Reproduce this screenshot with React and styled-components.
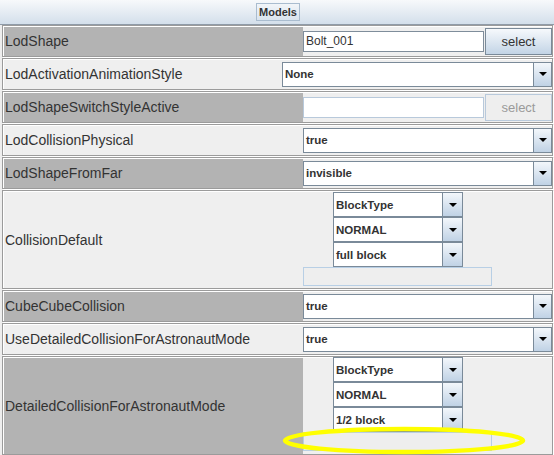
import React from 'react';
import styled, { createGlobalStyle } from 'styled-components';

const Global = createGlobalStyle`
  html, body { margin: 0; padding: 0; background: #eeeeee; overflow: hidden; }
  * { box-sizing: border-box; }
`;

const Page = styled.div`
  position: relative;
  width: 554px;
  height: 455px;
  overflow: hidden;
  background: #eeeeee;
  font-family: "Liberation Sans", Arial, sans-serif;
`;

const Header = styled.div`
  height: 25px;
  border-bottom: 1px solid #8f9ba8;
  background: linear-gradient(#f7f9fb, #d3dfeb);
  display: flex;
  align-items: center;
  justify-content: center;
  padding-left: 2px;
`;

const Title = styled.div`
  height: 18px;
  padding: 0 2px;
  border: 1px solid #a9bccf;
  font-weight: bold;
  font-size: 11px;
  color: #333;
  display: flex;
  align-items: center;
`;

const List = styled.div`
  display: flex;
  flex-direction: column;
  padding-left: 2px;
`;

const Row = styled.div`
  display: flex;
  flex: none;
  width: 551px;
  height: ${p => p.$h || 32}px;
  border: 1px solid #9b9b9b;
  box-shadow: inset 1px 1px 0 #fff, 1px 1px 0 #fff;
  margin-bottom: 1px;
  background: #efefef;
`;

const Label = styled.div`
  width: ${p => p.$w || 300}px;
  flex: none;
  display: flex;
  align-items: center;
  padding-left: 2px;
  font-size: 14px;
  color: #333;
  background: ${p => (p.$gray ? '#b3b3b3' : 'transparent')};
  box-shadow: inset 1px 1px 0 #fff;
  white-space: nowrap;
`;

const Value = styled.div`
  flex: 1;
  display: flex;
  align-items: center;
  min-width: 0;
`;

const Stack = styled.div`
  flex: 1;
  display: flex;
  flex-direction: column;
  align-items: flex-start;
  padding-top: ${p => p.$top ?? 1}px;
`;

const TextField = styled.div`
  width: 181px;
  height: 21px;
  margin-right: 1px;
  border: 1px solid ${p => (p.$disabled ? '#b8c9db' : '#7f8d9b')};
  background: #fff;
  padding-left: 2px;
  display: flex;
  align-items: center;
  font-size: 12px;
  color: #333;
`;

const Button = styled.div`
  width: 67px;
  height: 27px;
  border: 1px solid ${p => (p.$disabled ? '#b8c9db' : '#7a8a99')};
  background: ${p => (p.$disabled ? '#eeeeee' : 'linear-gradient(#f6f9fc, #c3d4e6)')};
  color: ${p => (p.$disabled ? '#9a9a9a' : '#333')};
  font-size: 13px;
  display: flex;
  align-items: center;
  justify-content: center;
`;

const Combo = styled.div`
  display: flex;
  flex: none;
  width: ${p => p.$w}px;
  height: 25px;
  border: 1px solid #7a8a99;
  background: #fff;
  margin-left: ${p => p.$indent || 0}px;
`;

const ComboText = styled.div`
  flex: 1;
  display: flex;
  align-items: center;
  padding-left: 2px;
  font-size: 11.5px;
  font-weight: bold;
  color: #333;
`;

const ArrowButton = styled.div`
  width: ${p => p.$w || 18}px;
  flex: none;
  border-left: 1px solid #7a8a99;
  background: linear-gradient(#f3f7fb, #c0d2e5);
  display: flex;
  align-items: center;
  justify-content: center;
`;

const EmptyPanel = styled.div`
  width: 189px;
  height: 19px;
  border: 1px solid #b8cfe5;
  background: #eeeeee;
`;

const Highlight = styled.svg`
  position: absolute;
  left: 0;
  top: 0;
  pointer-events: none;
`;

const Arrow = () => (
  <svg width="8" height="4" viewBox="0 0 8 4">
    <path d="M0 0H8L4 4Z" fill="#000" />
  </svg>
);

const Dropdown = ({ w, value, indent, arrowW }) => (
  <Combo $w={w} $indent={indent}>
    <ComboText>{value}</ComboText>
    <ArrowButton $w={arrowW}>
      <Arrow />
    </ArrowButton>
  </Combo>
);

const SubCombos = ({ values, top }) => (
  <Stack $top={top}>
    {values.map((v, i) => (
      <Dropdown key={i} w={130} indent={30} arrowW={20} value={v} />
    ))}
    <EmptyPanel />
  </Stack>
);

export default function App() {
  return (
    <Page>
      <Global />
      <Header>
        <Title>Models</Title>
      </Header>
      <List>
        <Row>
          <Label $gray>LodShape</Label>
          <Value>
            <TextField>Bolt_001</TextField>
            <Button>select</Button>
          </Value>
        </Row>
        <Row>
          <Label $w={279}>LodActivationAnimationStyle</Label>
          <Value>
            <Dropdown w={270} value="None" />
          </Value>
        </Row>
        <Row>
          <Label $gray>LodShapeSwitchStyleActive</Label>
          <Value>
            <TextField $disabled />
            <Button $disabled>select</Button>
          </Value>
        </Row>
        <Row>
          <Label>LodCollisionPhysical</Label>
          <Value>
            <Dropdown w={249} value="true" />
          </Value>
        </Row>
        <Row>
          <Label $gray>LodShapeFromFar</Label>
          <Value>
            <Dropdown w={249} value="invisible" />
          </Value>
        </Row>
        <Row $h={99}>
          <Label>CollisionDefault</Label>
          <SubCombos top={1} values={['BlockType', 'NORMAL', 'full block']} />
        </Row>
        <Row>
          <Label $gray>CubeCubeCollision</Label>
          <Value>
            <Dropdown w={249} value="true" />
          </Value>
        </Row>
        <Row>
          <Label>UseDetailedCollisionForAstronautMode</Label>
          <Value>
            <Dropdown w={249} value="true" />
          </Value>
        </Row>
        <Row $h={99}>
          <Label $gray>DetailedCollisionForAstronautMode</Label>
          <SubCombos top={0} values={['BlockType', 'NORMAL', '1/2 block']} />
        </Row>
      </List>
      <Highlight width="554" height="470">
        <ellipse cx="404" cy="440.5" rx="119" ry="11.5" fill="none" stroke="#ffff00" strokeWidth="4.5" />
      </Highlight>
    </Page>
  );
}
